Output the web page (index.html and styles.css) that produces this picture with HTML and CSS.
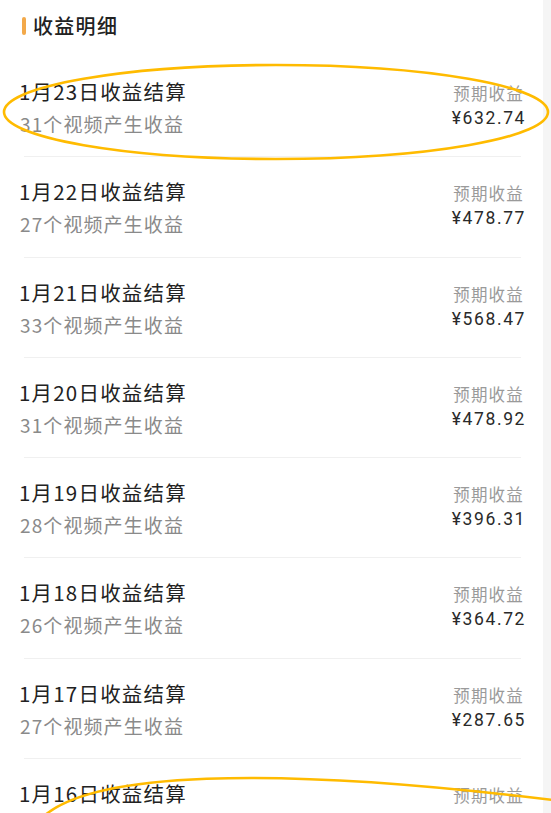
FILE: index.html
```html
<!DOCTYPE html>
<html lang="zh-CN">
<head>
<meta charset="utf-8">
<title>收益明细</title>
<link rel="stylesheet" href="styles.css">
</head>
<body>
<div class="page">
  <main class="panel">
    <header class="head">
      <span class="bar"></span>
      <h1 class="head-title">收益明细</h1>
    </header>
    <section class="list">
      <div class="row">
        <div class="left"><div class="title">1月23日收益结算</div><div class="sub">31个视频产生收益</div></div>
        <div class="right"><div class="label">预期收益</div><div class="amount">¥632.74</div></div>
      </div>
      <div class="divider"></div>
      <div class="row">
        <div class="left"><div class="title">1月22日收益结算</div><div class="sub">27个视频产生收益</div></div>
        <div class="right"><div class="label">预期收益</div><div class="amount">¥478.77</div></div>
      </div>
      <div class="divider"></div>
      <div class="row">
        <div class="left"><div class="title">1月21日收益结算</div><div class="sub">33个视频产生收益</div></div>
        <div class="right"><div class="label">预期收益</div><div class="amount">¥568.47</div></div>
      </div>
      <div class="divider"></div>
      <div class="row">
        <div class="left"><div class="title">1月20日收益结算</div><div class="sub">31个视频产生收益</div></div>
        <div class="right"><div class="label">预期收益</div><div class="amount">¥478.92</div></div>
      </div>
      <div class="divider"></div>
      <div class="row">
        <div class="left"><div class="title">1月19日收益结算</div><div class="sub">28个视频产生收益</div></div>
        <div class="right"><div class="label">预期收益</div><div class="amount">¥396.31</div></div>
      </div>
      <div class="divider"></div>
      <div class="row">
        <div class="left"><div class="title">1月18日收益结算</div><div class="sub">26个视频产生收益</div></div>
        <div class="right"><div class="label">预期收益</div><div class="amount">¥364.72</div></div>
      </div>
      <div class="divider"></div>
      <div class="row">
        <div class="left"><div class="title">1月17日收益结算</div><div class="sub">27个视频产生收益</div></div>
        <div class="right"><div class="label">预期收益</div><div class="amount">¥287.65</div></div>
      </div>
      <div class="divider"></div>
      <div class="row">
        <div class="left"><div class="title">1月16日收益结算</div><div class="sub">29个视频产生收益</div></div>
        <div class="right"><div class="label">预期收益</div><div class="amount">¥301.18</div></div>
      </div>
    </section>
  </main>
  <aside class="strip"></aside>
  <svg class="marks" width="551" height="813" viewBox="0 0 551 813">
    <ellipse cx="276" cy="112" rx="272" ry="47" fill="none" stroke="#FFBB00" stroke-width="2.6"/>
    <path d="M44 816 C 92 774, 260 764, 553 800" fill="none" stroke="#FFBB00" stroke-width="2.6"/>
  </svg>
</div>
</body>
</html>
```
FILE: styles.css
```css
html, body {
  margin: 0;
  padding: 0;
  background: #ffffff;
}
body {
  font-family: "Noto Sans CJK SC", "Noto Sans", sans-serif;
  width: 551px;
  height: 813px;
  overflow: hidden;
}
.page {
  position: relative;
  display: flex;
  width: 551px;
  height: 813px;
  overflow: hidden;
}
.panel {
  width: 543px;
  flex: none;
  background: #ffffff;
}
.strip {
  flex: 1;
  background: #f5f5f5;
}
.head {
  height: 57px;
  display: flex;
  align-items: center;
  padding-left: 22px;
  box-sizing: border-box;
  padding-bottom: 6px;
}
.bar {
  width: 4px;
  height: 18px;
  border-radius: 2px;
  background: #f3a94a;
  margin-right: 7px;
}
.head-title {
  margin: 0;
  font-size: 20px;
  font-weight: 500;
  color: #222222;
  letter-spacing: 1.3px;
  line-height: 28px;
}
.row {
  display: flex;
  justify-content: space-between;
  padding: 20px 20px 18px 19px;
  height: 61.3px;
}
.title {
  font-size: 20.5px;
  line-height: 28px;
  color: #222222;
  letter-spacing: 1.2px;
}
.sub {
  margin-top: 5px;
  font-size: 19px;
  line-height: 28px;
  color: #8a8a8a;
  letter-spacing: 1.1px;
  padding-left: 1px;
}
.right {
  text-align: right;
  padding-top: 4px;
}
.label {
  font-size: 16.5px;
  line-height: 24px;
  color: #9a9a9a;
  letter-spacing: 1.2px;
  margin-right: -1px;
}
.amount {
  font-family: Roboto, "Noto Sans CJK SC", sans-serif;
  font-size: 17.5px;
  line-height: 26px;
  color: #2a2a2a;
  letter-spacing: 1.6px;
  margin-right: -3px;
}
.divider {
  height: 1px;
  background: #f0f0f0;
  margin: 0 22px 0 24px;
}
.marks {
  position: absolute;
  left: 0;
  top: 0;
  pointer-events: none;
}
```
